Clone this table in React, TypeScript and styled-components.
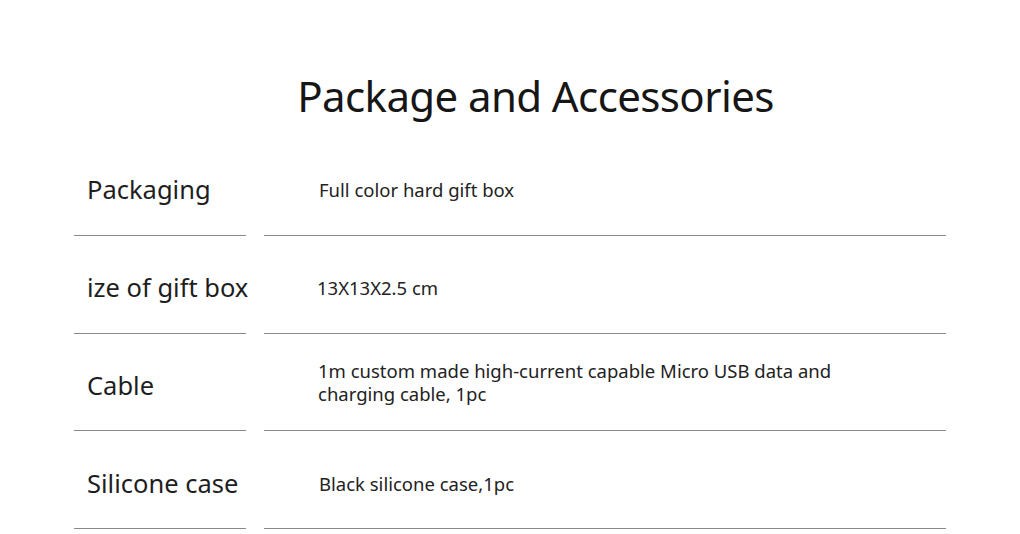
import { FC } from "react";
import styled, { createGlobalStyle } from "styled-components";

const GlobalStyle = createGlobalStyle`
  html, body {
    margin: 0;
    padding: 0;
    background: #fff;
  }
  body {
    font-family: "Noto Sans", "Open Sans", sans-serif;
    color: #1a1a1a;
  }
`;

const Page = styled.div`
  width: 1020px;
  height: 534px;
  overflow: hidden;
  display: flex;
  flex-direction: column;
  align-items: center;
`;

const Title = styled.h1`
  margin: 69px 0 0 51px;
  font-size: 42px;
  font-weight: 400;
  line-height: 54px;
  letter-spacing: -0.6px;
  color: #161616;
`;

const Table = styled.div`
  margin-top: 15px;
  width: 872px;
  display: flex;
  flex-direction: column;
`;

const Row = styled.div`
  display: grid;
  grid-template-columns: 172px 682px;
  column-gap: 18px;
  height: 97.8px;
`;

const Cell = styled.div`
  display: flex;
  align-items: center;
  padding-top: 6px;
  border-bottom: 1px solid #8a8a8a;
  box-sizing: border-box;
  white-space: nowrap;
`;

const Label = styled(Cell)`
  padding-left: 13px;
  font-size: 25.5px;
  color: #1e1e1e;
`;

const Value = styled(Cell)<{ $indent?: number; $lift?: boolean }>`
  padding-left: ${p => p.$indent ?? 55}px;
  padding-top: ${p => (p.$lift ? 0 : 7)}px;
  font-size: 18.5px;
  line-height: 23px;
  color: #222;
  white-space: normal;
`;

const ValueText = styled.span`
  max-width: 530px;
`;

const rows = [
  { label: "Packaging", value: "Full color hard gift box", indent: 55 },
  { label: "ize of gift box", value: "13X13X2.5 cm", indent: 53 },
  {
    label: "Cable",
    value: "1m custom made high-current capable Micro USB data and charging cable, 1pc",
    indent: 54,
    lift: true,
  },
  { label: "Silicone case", value: "Black silicone case,1pc", indent: 55 },
];

const App: FC = () => {
  return (
    <>
      <GlobalStyle />
      <Page>
        <Title>Package and Accessories</Title>
        <Table>
          {rows.map(r => (
            <Row key={r.label}>
              <Label>{r.label}</Label>
              <Value $indent={r.indent} $lift={r.lift}>
                <ValueText>{r.value}</ValueText>
              </Value>
            </Row>
          ))}
        </Table>
      </Page>
    </>
  );
};

export default App;
